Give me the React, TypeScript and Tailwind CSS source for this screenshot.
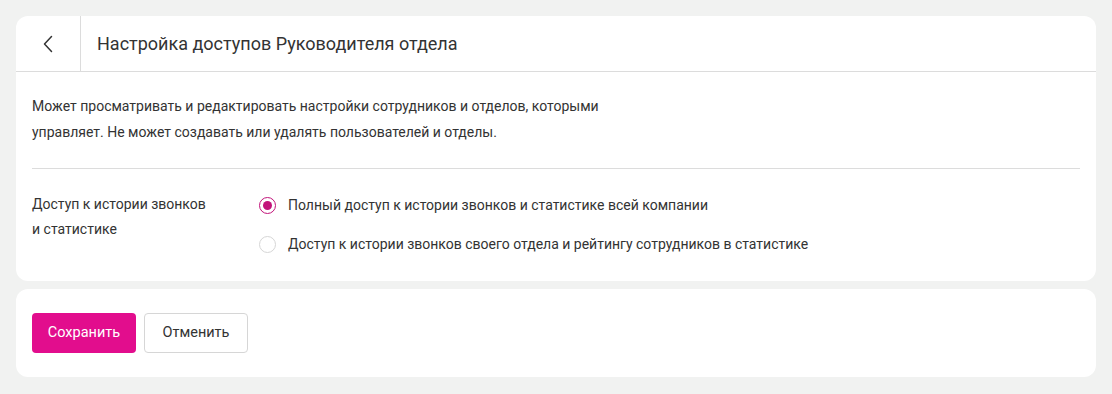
import React, { useState } from "react";

export default function App() {
  const [sel, setSel] = useState(0);
  const options = [
    "Полный доступ к истории звонков и статистике всей компании",
    "Доступ к истории звонков своего отдела и рейтингу сотрудников в статистике",
  ];
  return (
    <div
      className="min-h-[394px] w-full bg-[#f1f2f1] p-4 flex flex-col gap-2 text-[#333333]"
      style={{ fontFamily: "Roboto, 'Noto Sans', sans-serif" }}
    >
      <div className="bg-white rounded-xl">
        <div className="flex h-[56px] border-b border-[#dcdcdc]">
          <button className="w-[65px] border-r border-[#dcdcdc] flex items-center justify-center">
            <svg width="12" height="18" viewBox="0 0 12 18" fill="none">
              <path d="M9.5 1.5L2.5 9l7 7.5" stroke="#333" strokeWidth="1.5" strokeLinecap="round" strokeLinejoin="round" />
            </svg>
          </button>
          <div className="flex items-center pl-4 text-[18px] font-normal text-[#333]">
            Настройка доступов Руководителя отдела
          </div>
        </div>
        <div className="px-4 pt-[21px] pb-[24px]">
          <p className="text-[14px] leading-[26px] max-w-[600px]">
            Может просматривать и редактировать настройки сотрудников и отделов, которыми
            управляет. Не может создавать или удалять пользователей и отделы.
          </p>
          <div className="h-px bg-[#dcdcdc] mt-[23px] mb-[23px]" />
          <div className="flex">
            <div className="w-[227px] text-[14px] leading-[25px]">
              Доступ к истории звонков
              <br />и статистике
            </div>
            <div className="flex flex-col gap-[13px]">
              {options.map((o, i) => (
                <label key={i} className="flex items-center gap-3 text-[14px] leading-[26px] cursor-pointer" onClick={() => setSel(i)}>
                  <span
                    className={
                      i === sel
                        ? "w-[17px] h-[17px] rounded-full border-[1.5px] border-[#c2137a] flex items-center justify-center"
                        : "w-[17px] h-[17px] rounded-full border border-[#d6d6d6]"
                    }
                  >
                    {i === sel && <span className="w-[9px] h-[9px] rounded-full bg-[#c2137a]" />}
                  </span>
                  {o}
                </label>
              ))}
            </div>
          </div>
        </div>
      </div>
      <div className="bg-white rounded-xl p-4 py-6 flex gap-2">
        <button className="w-[104px] h-10 rounded bg-[#e20d8d] text-white text-[14.5px] font-normal">
          Сохранить
        </button>
        <button className="w-[104px] h-10 rounded border border-[#d6d6d6] bg-white text-[#333] text-[14.5px] font-normal">
          Отменить
        </button>
      </div>
    </div>
  );
}
